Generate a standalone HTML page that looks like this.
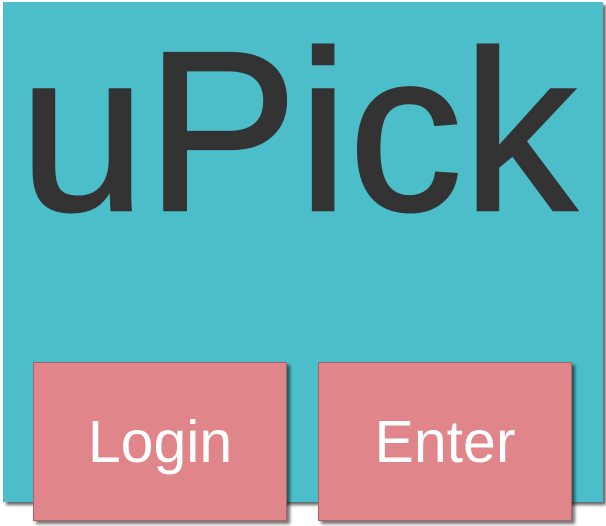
<!DOCTYPE html>
<html><head><style>
html,body{margin:0;padding:0;background:#fff;width:606px;height:526px;overflow:hidden}
.panel{position:absolute;left:3px;top:2px;width:600px;height:500px;background:#4cbec9;box-shadow:3px 3px 3px rgba(0,0,0,.6)}
.title{position:absolute;left:19px;top:132px;font-family:"Liberation Sans",Arial,sans-serif;font-size:228px;color:#333;line-height:0;-webkit-text-stroke:2.5px #333}
.btn{position:absolute;top:362px;width:254px;height:159px;background:#e0858a;border:1px solid #a8636a;box-sizing:border-box;box-shadow:3px 3px 3px rgba(0,0,0,.55);color:#fff;font-family:"Liberation Sans",Arial,sans-serif;font-size:59px;text-align:center;line-height:159px}
</style></head><body>
<div class="panel"></div>
<div class="title"><span style="position:absolute;left:0;top:0;white-space:nowrap;line-height:0">uPick</span></div>
<div class="btn" style="left:33px">Login</div>
<div class="btn" style="left:318px">Enter</div>
</body></html>
